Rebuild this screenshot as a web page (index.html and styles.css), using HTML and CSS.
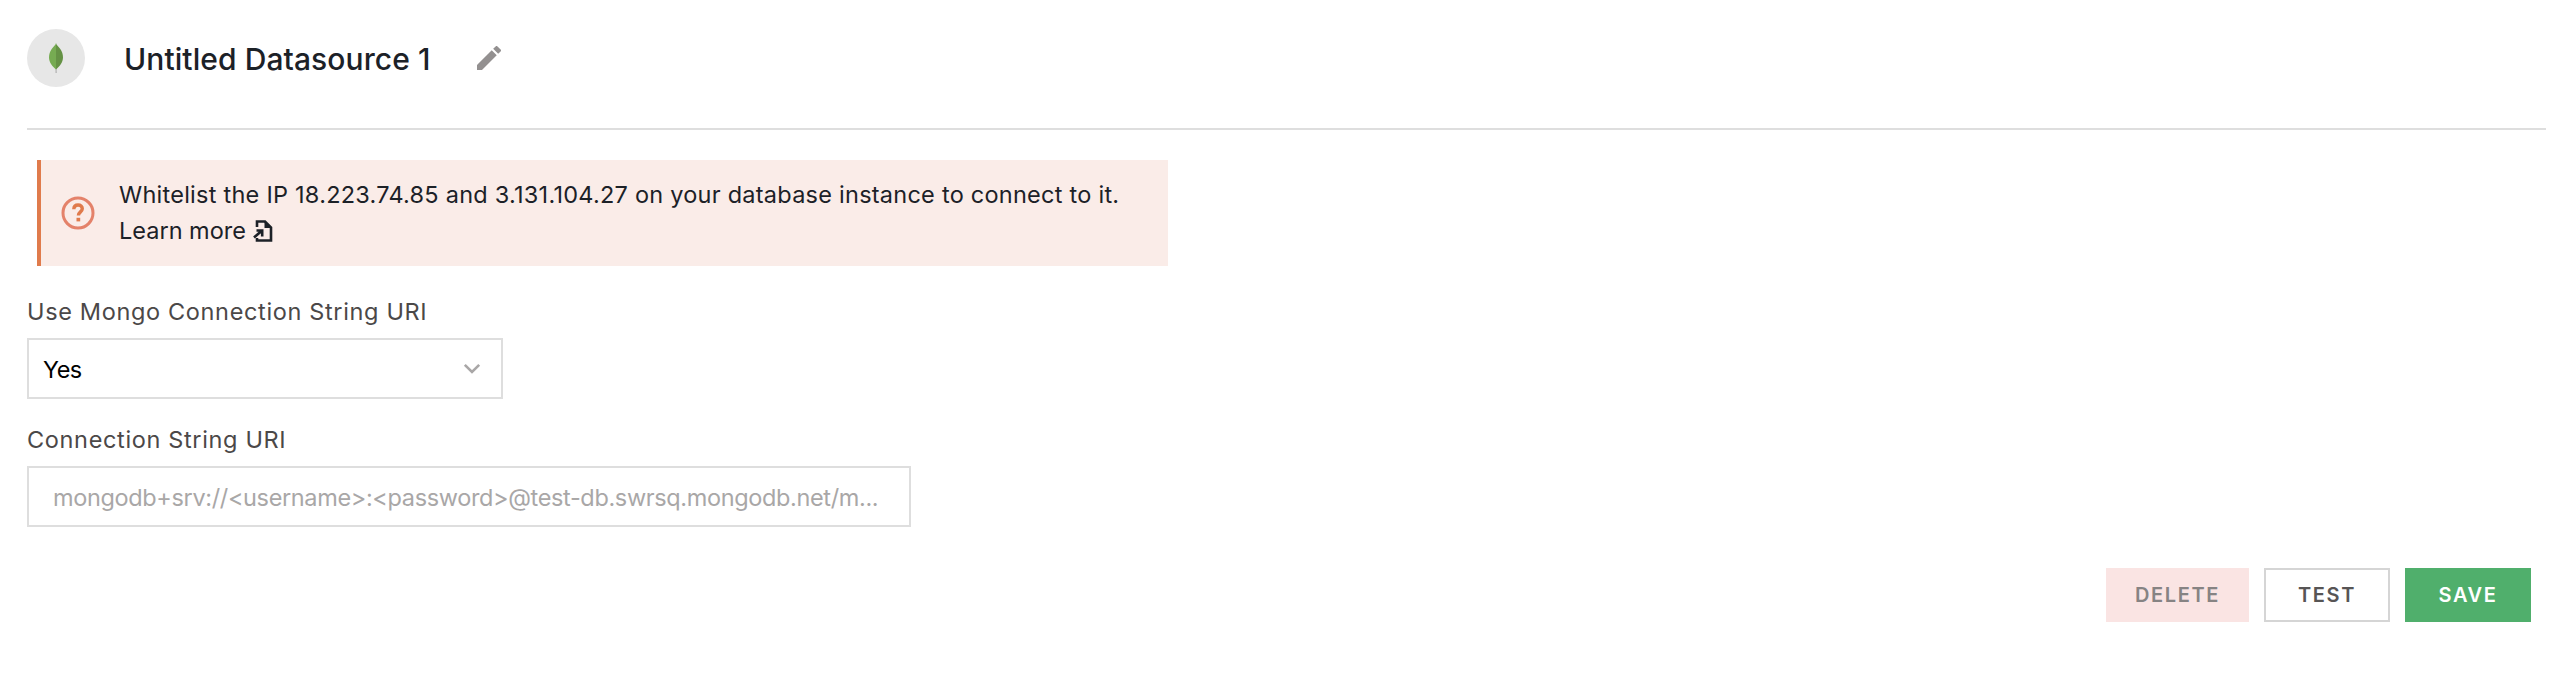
FILE: index.html
```html
<!DOCTYPE html>
<html lang="en">
<head>
<meta charset="utf-8">
<title>Datasource</title>
<link rel="stylesheet" href="styles.css">
</head>
<body>
<main class="page">
  <header class="header">
    <div class="logo">
      <svg width="16" height="30" viewBox="0 0 16 30"><path d="M7.400 22h1.200l.4 8H7.400z" fill="#bdbdbd"/><path d="M8 0c.3 2 2.500 3.500 4.300 6 1.800 2.600 2.700 5.300 2.700 8.500 0 5-3.500 9-7 12z" fill="#659245"/><path d="M8 0C7.700 2 5.500 3.500 3.700 6 1.900 8.600 1 11.300 1 14.500c0 5 3.500 9 7 12z" fill="#76ab52"/></svg>
    </div>
    <h1 class="title">Untitled Datasource 1</h1>
    <svg class="pencil" width="24" height="24" viewBox="3 3 18 18"><path d="M3 17.250V21h3.750L17.810 9.940l-3.750-3.750L3 17.250zM20.710 7.040a1 1 0 0 0 0-1.410l-2.340-2.340a1 1 0 0 0-1.410 0l-1.830 1.830 3.750 3.750 1.830-1.830z" fill="#939090"/></svg>
  </header>
  <section class="callout">
    <svg class="help" width="34" height="34" viewBox="0 0 34 34" fill="none"><circle cx="17" cy="17" r="15" stroke="#e4826a" stroke-width="3"/><path d="M12.800 13.200c.1-2.700 1.900-4.200 4.300-4.200s4.200 1.500 4.200 3.800c0 3-3.900 3.200-3.900 6.700" stroke="#e07b4c" stroke-width="3.400"/><path d="M15.500 21.800h3.700V25.400h-3.700z" fill="#e07b4c"/></svg>
    <p class="callout-text">Whitelist the IP 18.223.74.85 and 3.131.104.27 on your database instance to connect to it.<br><a class="link">Learn more<svg class="doc" width="20" height="22" viewBox="0 0 20 22" fill="none" stroke="#1c2127"><path d="M4 7V1.500h8L18 7.500V20.500H4V18" stroke-width="2.600"/><path d="M11.500 1v7h7z" fill="#1c2127" stroke="none"/><path d="M1 17.500 8.500 11M3.500 10.500H9.200V16.500" stroke-width="2.600"/></svg></a></p>
  </section>
  <div class="field">
    <label class="label">Use Mongo Connection String URI</label>
    <div class="select"><span>Yes</span><svg width="18" height="12" viewBox="0 0 18 12" fill="none"><path d="M1.800 1.800 9 9l7.200-7.200" stroke="#a9a7a7" stroke-width="2.600"/></svg></div>
  </div>
  <div class="field field-uri">
    <label class="label">Connection String URI</label>
    <div class="input"><span>mongodb+srv://&lt;username&gt;:&lt;password&gt;@test-db.swrsq.mongodb.net/m...</span></div>
  </div>
  <footer class="actions">
    <button class="btn delete">DELETE</button>
    <button class="btn test">TEST</button>
    <button class="btn save">SAVE</button>
  </footer>
</main>
</body>
</html>
```

FILE: styles.css
```css
* { box-sizing: border-box; }
body { margin: 0; background: #fff; font-family: Inter, "Liberation Sans", sans-serif; font-size: 23.5px; }
.page { padding: 0 26px 0 27px; }
.header { display: flex; align-items: center; height: 130px; padding-bottom: 12px; border-bottom: 2px solid #dedede; }
.logo { display: flex; align-items: center; justify-content: center; width: 58px; height: 58px; border-radius: 50%; background: #e7e7e7; }
.title { margin: 2px 0 0 39px; font-size: 30px; line-height: 36px; font-weight: 500; letter-spacing: 0.08px; color: #1c2127; }
.pencil { margin-left: 46px; }
.callout { display: flex; align-items: center; width: 1131px; height: 106px; margin: 30px 0 0 10px; padding-left: 20px; border-left: 4px solid #e07b4c; background: #faece8; color: #1c2127; }
.callout-text { margin: 0 0 0 24px; line-height: 36px; letter-spacing: 0.25px; white-space: nowrap; }
.link { letter-spacing: 0; }
.doc { margin-left: 7px; vertical-align: -3px; }
.field { margin-top: 28px; }
.field-uri { margin-top: 23px; }
.label { display: block; line-height: 36px; letter-spacing: 0.65px; color: #4b4848; }
.select, .input { display: flex; align-items: center; height: 61px; border: 2px solid #dedede; margin-top: 8px; }
.select { justify-content: space-between; width: 476px; padding: 1px 20px 0 14px; color: #000; }
.select span { letter-spacing: -0.5px; }
.input { width: 884px; padding: 2px 0 0 24px; letter-spacing: -0.36px; color: #a9a7a7; white-space: nowrap; }
.actions { display: flex; justify-content: flex-end; gap: 15px; margin-top: 41px; padding-right: 15px; }
.btn { width: 126px; height: 54px; padding: 0; border: 0; font: 600 20px Inter, sans-serif; letter-spacing: 1.6px; }
.delete { width: 143px; background: #fae4e3; color: #868383; }
.test { border: 2px solid #d5d5d5; background: #fff; color: #575555; }
.save { background: #50af6c; color: #fff; }
```
